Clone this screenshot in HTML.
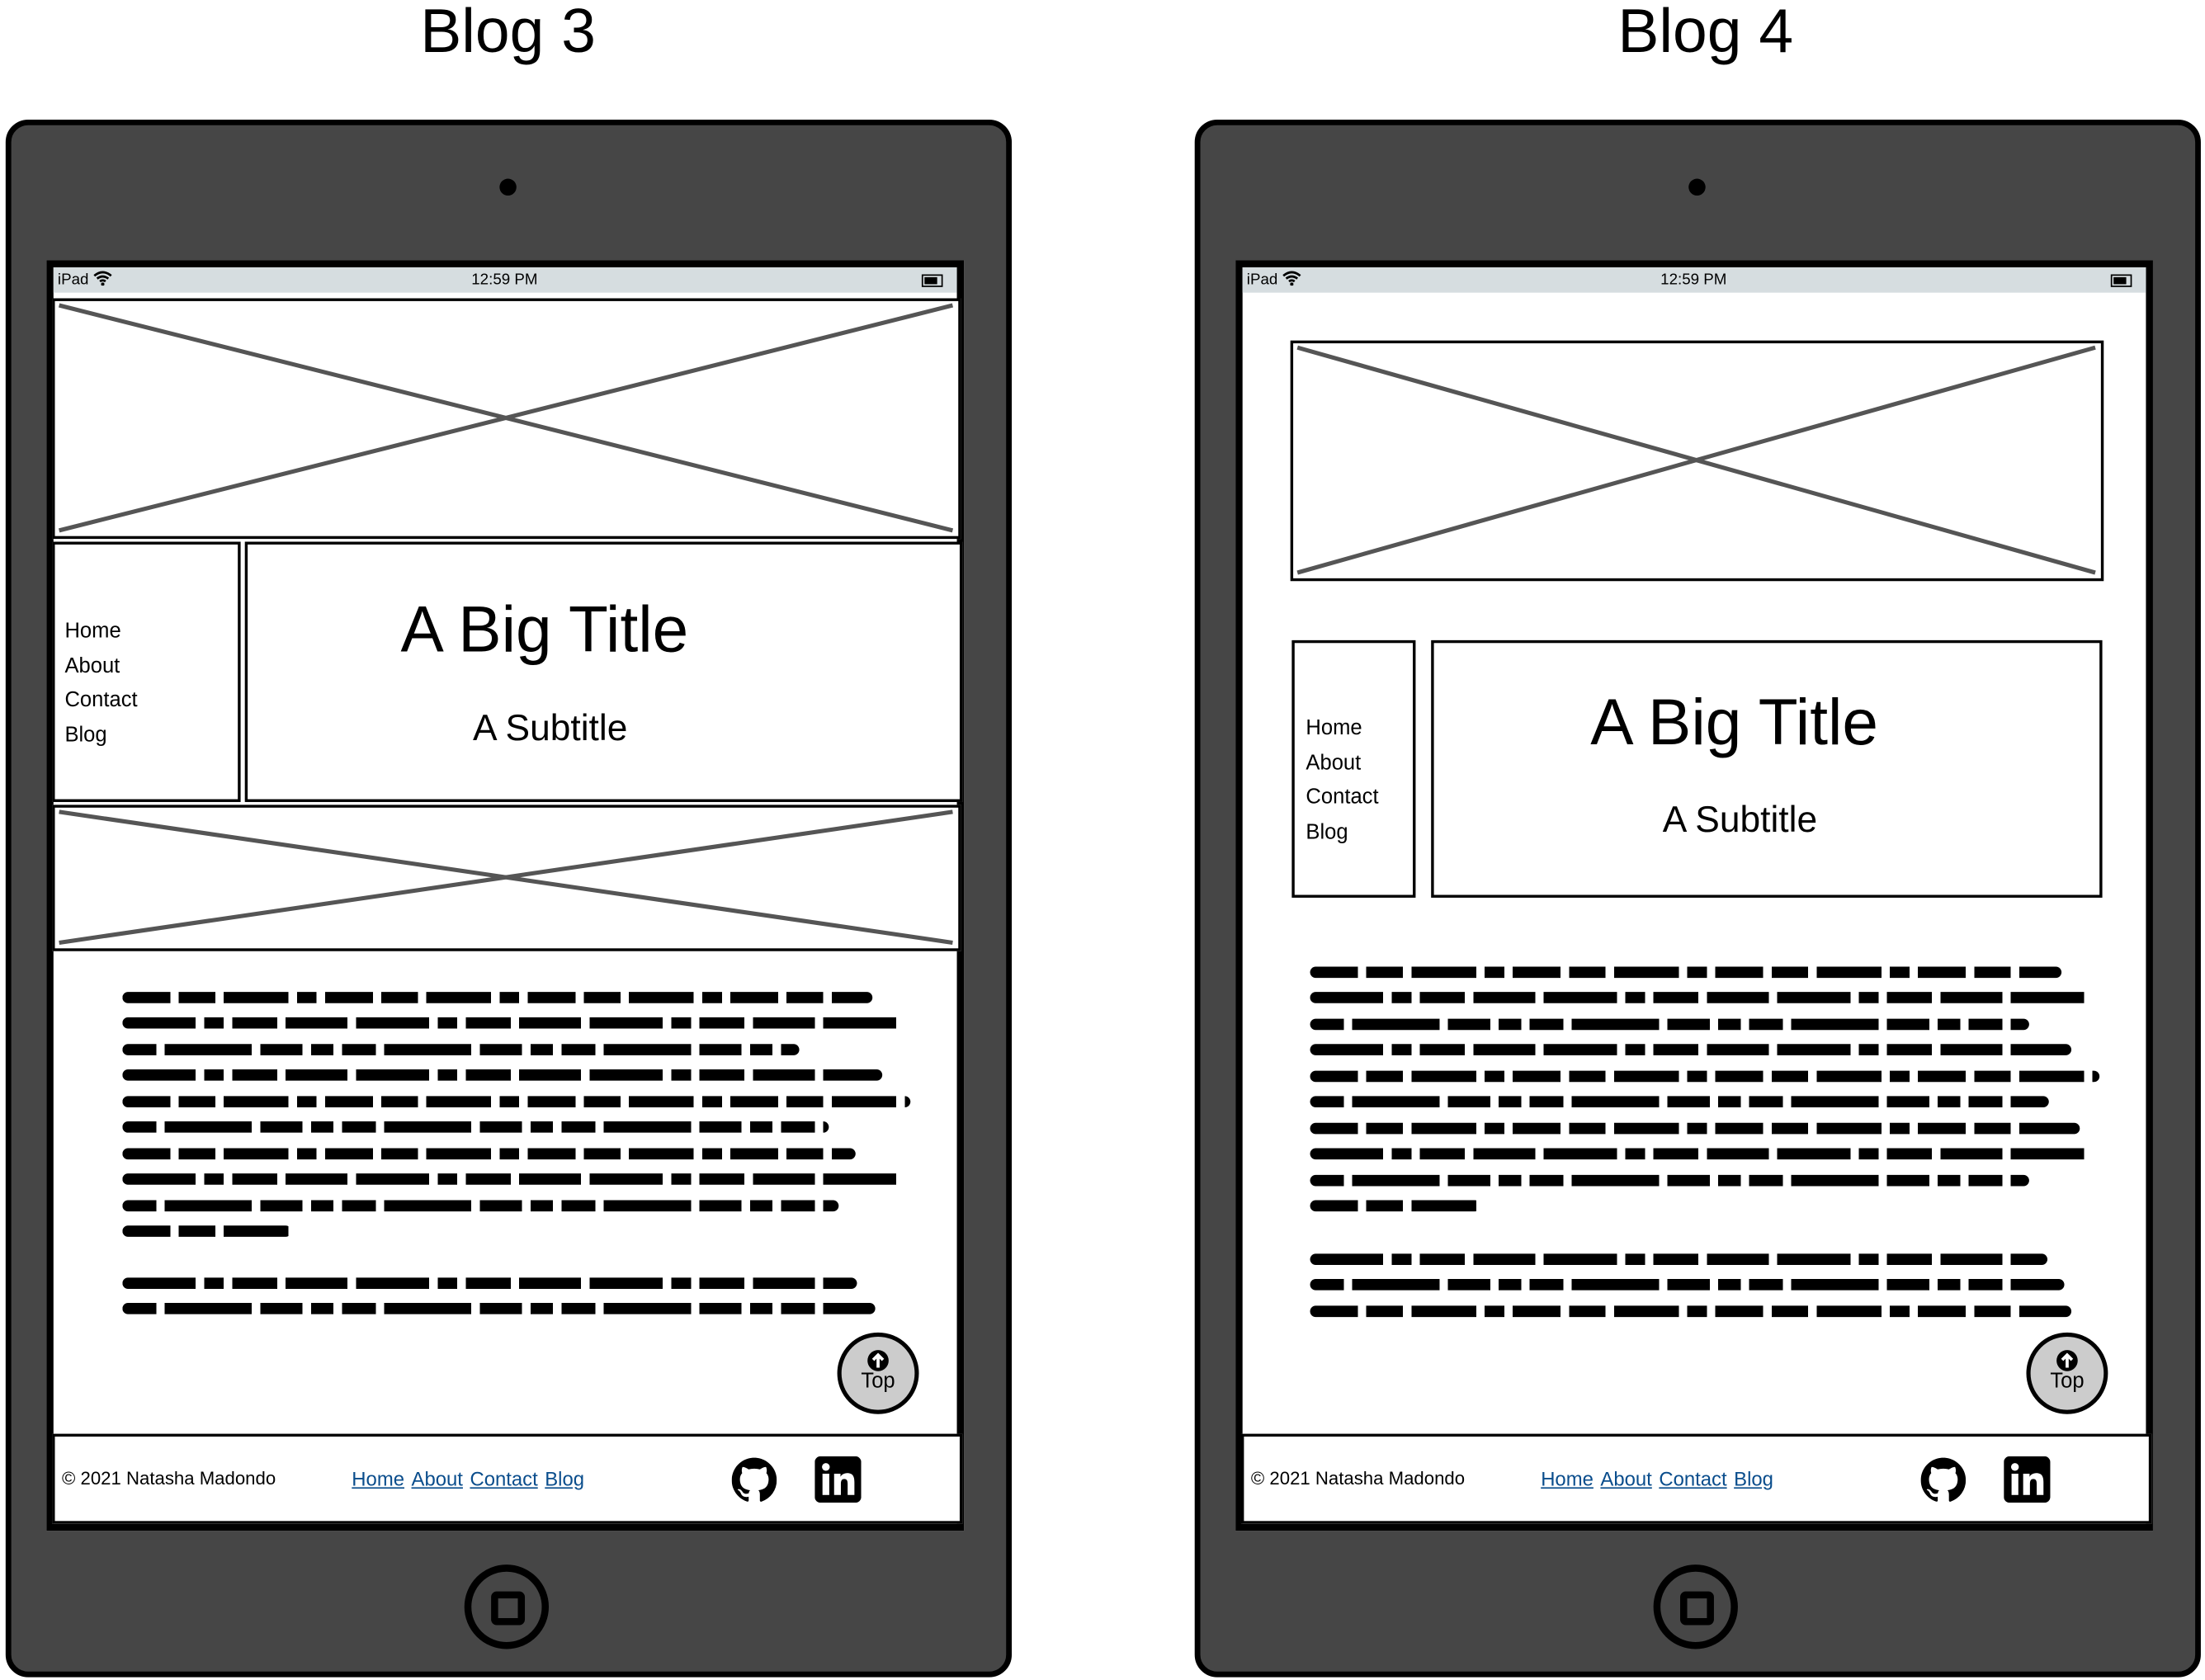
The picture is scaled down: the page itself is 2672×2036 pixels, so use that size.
<!DOCTYPE html>
<html><head><meta charset="utf-8">
<style>
html,body{margin:0;padding:0;background:#fff;overflow:hidden;width:2672px;height:2036px}
#w{position:absolute;left:0;top:0;width:1567px;height:1194px;transform:scale(1.7052);transform-origin:0 0;font-family:"Liberation Sans",sans-serif;color:#000}
.a{position:absolute}
.h1{font-size:44px;width:400px;text-align:center;top:-2px}
.dev{position:absolute;top:85px;width:707px;height:1099px;background:#464646;border:4px solid #000;border-radius:16px}
.cam{position:absolute;width:12px;height:12px;border-radius:50%;background:#000;left:347px;top:38px}
.scr{position:absolute;left:25px;top:96px;width:642px;height:893px;background:#fff;border:5px solid #000}
.sb{position:absolute;left:0;top:0;right:0;height:18px;background:#d6dde0;font-size:11px;line-height:18px}
.box{position:absolute;border:2.5px solid #000;box-sizing:border-box;background:#fff}
.nav{font-size:15px;line-height:24.7px}
.ttl{font-size:46px;text-align:center;width:100%;position:absolute}
.sub{font-size:26px;text-align:center;width:100%;position:absolute}
.ln{position:absolute;height:8px;border-radius:4px}
.l1{background:repeating-linear-gradient(90deg,#000 0 34px,transparent 34px 40px,#000 40px 66px,transparent 66px 72px,#000 72px 118px,transparent 118px 124px,#000 124px 138px,transparent 138px 144px)}
.l2{background:repeating-linear-gradient(90deg,#000 0 52px,transparent 52px 58px,#000 58px 72px,transparent 72px 78px,#000 78px 110px,transparent 110px 116px,#000 116px 160px,transparent 160px 166px)}
.l3{background:repeating-linear-gradient(90deg,#000 0 24px,transparent 24px 30px,#000 30px 92px,transparent 92px 98px,#000 98px 128px,transparent 128px 134px,#000 134px 150px,transparent 150px 156px)}
.top{position:absolute;width:52px;height:52px;border-radius:50%;background:#ccc;border:3px solid #000;text-align:center;font-size:15px}
.ft{font-size:13px}
.lk{color:#0a4d8c;text-decoration:underline;font-size:14px;margin-right:5px}
.home{position:absolute;width:50px;height:50px;border-radius:50%;border:5px solid #000;left:322px;top:1023px}
.home div{position:absolute;left:14px;top:14px;width:14px;height:14px;border:5px solid #000;border-radius:4px}
</style></head><body><div id="w">
<div class="a h1" style="left:161px">Blog 3</div>
<div class="a h1" style="left:1012px">Blog 4</div>

<!-- device 1 -->
<div class="dev" style="left:4px">
 <div class="cam"></div>
 <div class="scr">
  <div class="sb"><span class="a" style="left:3px">iPad <svg width="14" height="11" viewBox="0 0 14 11" style="vertical-align:-1px"><path d="M1 4Q7-1 13 4M3 6Q7 3 11 6M5 8Q7 6.5 9 8" stroke="#000" stroke-width="1.6" fill="none"/><circle cx="7" cy="10" r="1.2"/></svg></span><span class="a" style="left:297px">12:59 PM</span><span class="a" style="left:617px;top:5px;width:13px;height:7px;border:1px solid #000"><span class="a" style="left:1px;top:1px;width:9px;height:5px;background:#000"></span></span></div>
  <div class="box" style="left:-1px;top:22px;width:646px;height:171px"><svg class="a" style="left:0;top:0" width="641" height="166"><path d="M3 3L638 163M638 3L3 163" stroke="#555" stroke-width="3"/></svg></div>
  <div class="box nav" style="left:-1px;top:195px;width:134px;height:185px;padding:50px 0 0 7px">Home<br>About<br>Contact<br>Blog</div>
  <div class="box" style="left:136px;top:195px;width:510px;height:185px"><div class="ttl" style="top:33px;left:-42px">A Big Title</div><div class="sub" style="top:115px;left:-38px">A Subtitle</div></div>
  <div class="box" style="left:-1px;top:382px;width:646px;height:104px"><svg class="a" style="left:0;top:0" width="641" height="99"><path d="M3 3L638 96M638 3L3 96" stroke="#555" stroke-width="3"/></svg></div>
  <div class="ln l1" style="left:49px;top:515px;width:533px"></div>
  <div class="ln l2" style="left:49px;top:533px;width:554px"></div>
  <div class="ln l3" style="left:49px;top:552px;width:481px"></div>
  <div class="ln l2" style="left:49px;top:570px;width:540px"></div>
  <div class="ln l1" style="left:49px;top:589px;width:560px"></div>
  <div class="ln l3" style="left:49px;top:607px;width:502px"></div>
  <div class="ln l1" style="left:49px;top:626px;width:521px"></div>
  <div class="ln l2" style="left:49px;top:644px;width:554px"></div>
  <div class="ln l3" style="left:49px;top:663px;width:509px"></div>
  <div class="ln l1" style="left:49px;top:681px;width:120px"></div>
  <div class="ln l2" style="left:49px;top:718px;width:522px"></div>
  <div class="ln l3" style="left:49px;top:736px;width:535px"></div>
  <div class="top" style="left:557px;top:757px"><svg width="16" height="16" viewBox="0 0 16 16" style="margin-top:9px;display:block;margin-left:18px"><circle cx="8" cy="8" r="7.5"/><path d="M8 13V4M4.5 7.5L8 4l3.5 3.5" stroke="#fff" stroke-width="2.2" fill="none"/></svg><div style="line-height:14px">Top</div></div>
  <div class="box" style="left:-1px;top:829px;width:647px;height:64px"></div>
  <div class="a ft" style="left:6px;top:853px">© 2021 Natasha Madondo</div>
  <div class="a" style="left:212px;top:853px"><span class="lk">Home</span><span class="lk">About</span><span class="lk">Contact</span><span class="lk">Blog</span></div>
  <svg class="a" style="left:482px;top:845px" width="32" height="34" viewBox="0 0 16 16"><path d="M8 0C3.58 0 0 3.580 0 8c0 3.54 2.29 6.53 5.47 7.59.4.07.55-.17.55-.38v-1.33c-2.23.48-2.7-1.07-2.7-1.07-.36-.93-.89-1.17-.89-1.17-.73-.5.06-.49.06-.49.8.06 1.23.82 1.23.82.72 1.23 1.87.87 2.33.66.07-.52.28-.87.5-1.07-1.78-.2-3.64-.89-3.64-3.95 0-.87.31-1.59.82-2.15-.08-.2-.36-1.02.08-2.12 0 0 .67-.21 2.2.82a7.6 7.6 0 014 0c1.53-1.04 2.2-.82 2.2-.82.44 1.1.16 1.92.08 2.12.51.56.82 1.27.82 2.15 0 3.07-1.87 3.75-3.65 3.95.29.25.54.73.54 1.48v2.2c0 .21.15.46.55.38A8 8 0 0016 8c0-4.420-3.58-8-8-8z"/></svg>
  <svg class="a" style="left:541px;top:845px" width="33" height="33" viewBox="0 0 24 24"><rect width="24" height="24" rx="3"/><rect x="4" y="9" width="3.5" height="11" fill="#fff"/><circle cx="5.75" cy="5.5" r="2" fill="#fff"/><path d="M10 9h3.3v1.6c.6-1.1 1.9-1.9 3.5-1.9 3 0 3.7 2 3.7 4.6V20h-3.5v-5.8c0-1.3-.3-2.5-1.7-2.5s-1.8 1-1.8 2.5V20H10z" fill="#fff"/></svg>
 </div>
 <div class="home"><div></div></div>
</div>

<!-- device 2 -->
<div class="dev" style="left:849px">
 <div class="cam"></div>
 <div class="scr">
  <div class="sb"><span class="a" style="left:3px">iPad <svg width="14" height="11" viewBox="0 0 14 11" style="vertical-align:-1px"><path d="M1 4Q7-1 13 4M3 6Q7 3 11 6M5 8Q7 6.5 9 8" stroke="#000" stroke-width="1.6" fill="none"/><circle cx="7" cy="10" r="1.2"/></svg></span><span class="a" style="left:297px">12:59 PM</span><span class="a" style="left:617px;top:5px;width:13px;height:7px;border:1px solid #000"><span class="a" style="left:1px;top:1px;width:9px;height:5px;background:#000"></span></span></div>
  <div class="box" style="left:34px;top:52px;width:578px;height:171px"><svg class="a" style="left:0;top:0" width="573" height="166"><path d="M3 3L570 163M570 3L3 163" stroke="#555" stroke-width="3"/></svg></div>
  <div class="box nav" style="left:35px;top:265px;width:88px;height:183px;padding:49px 0 0 8px">Home<br>About<br>Contact<br>Blog</div>
  <div class="box" style="left:134px;top:265px;width:477px;height:183px"><div class="ttl" style="top:29px;left:-23px">A Big Title</div><div class="sub" style="top:110px;left:-19px">A Subtitle</div></div>
  <div class="ln l1" style="left:48px;top:497px;width:534px"></div>
  <div class="ln l2" style="left:48px;top:515px;width:555px"></div>
  <div class="ln l3" style="left:48px;top:534px;width:511px"></div>
  <div class="ln l2" style="left:48px;top:552px;width:541px"></div>
  <div class="ln l1" style="left:48px;top:571px;width:561px"></div>
  <div class="ln l3" style="left:48px;top:589px;width:525px"></div>
  <div class="ln l1" style="left:48px;top:608px;width:547px"></div>
  <div class="ln l2" style="left:48px;top:626px;width:555px"></div>
  <div class="ln l3" style="left:48px;top:645px;width:511px"></div>
  <div class="ln l1" style="left:48px;top:663px;width:121px"></div>
  <div class="ln l2" style="left:48px;top:701px;width:524px"></div>
  <div class="ln l3" style="left:48px;top:719px;width:536px"></div>
  <div class="ln l1" style="left:48px;top:738px;width:541px"></div>
  <div class="top" style="left:557px;top:757px"><svg width="16" height="16" viewBox="0 0 16 16" style="margin-top:9px;display:block;margin-left:18px"><circle cx="8" cy="8" r="7.5"/><path d="M8 13V4M4.5 7.5L8 4l3.5 3.5" stroke="#fff" stroke-width="2.2" fill="none"/></svg><div style="line-height:14px">Top</div></div>
  <div class="box" style="left:-1px;top:829px;width:647px;height:64px"></div>
  <div class="a ft" style="left:6px;top:853px">© 2021 Natasha Madondo</div>
  <div class="a" style="left:212px;top:853px"><span class="lk">Home</span><span class="lk">About</span><span class="lk">Contact</span><span class="lk">Blog</span></div>
  <svg class="a" style="left:482px;top:845px" width="32" height="34" viewBox="0 0 16 16"><path d="M8 0C3.58 0 0 3.58 0 8c0 3.54 2.29 6.53 5.47 7.59.4.07.55-.17.55-.38v-1.33c-2.23.48-2.7-1.07-2.7-1.07-.36-.93-.89-1.17-.89-1.17-.73-.5.06-.49.06-.49.8.06 1.23.82 1.23.82.72 1.23 1.87.87 2.33.66.07-.52.28-.87.5-1.07-1.78-.2-3.64-.89-3.64-3.95 0-.87.31-1.59.82-2.15-.08-.2-.36-1.02.08-2.12 0 0 .67-.21 2.2.82a7.6 7.6 0 014 0c1.53-1.04 2.2-.82 2.2-.82.44 1.1.16 1.92.08 2.12.51.56.82 1.27.82 2.15 0 3.07-1.87 3.75-3.65 3.95.29.25.54.73.54 1.48v2.2c0 .21.15.46.55.38A8 8 0 0016 8c0-4.42-3.58-8-8-8z"/></svg>
  <svg class="a" style="left:541px;top:845px" width="33" height="33" viewBox="0 0 24 24"><rect width="24" height="24" rx="3"/><rect x="4" y="9" width="3.5" height="11" fill="#fff"/><circle cx="5.75" cy="5.5" r="2" fill="#fff"/><path d="M10 9h3.3v1.6c.6-1.1 1.9-1.9 3.5-1.9 3 0 3.7 2 3.7 4.6V20h-3.5v-5.8c0-1.3-.3-2.5-1.7-2.5s-1.8 1-1.8 2.5V20H10z" fill="#fff"/></svg>
 </div>
 <div class="home"><div></div></div>
</div>
</div></body></html>
